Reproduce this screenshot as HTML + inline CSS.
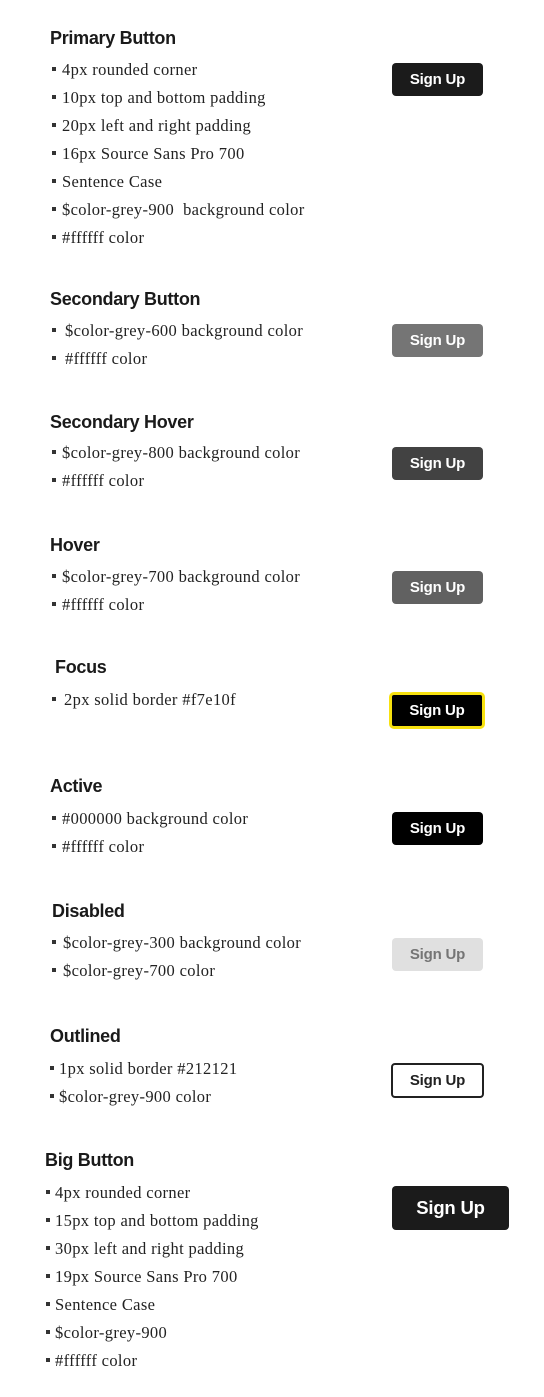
<!DOCTYPE html>
<html><head><meta charset="utf-8"><style>
body{margin:0;width:544px;height:1397px;background:#fff;position:relative;overflow:hidden}
.h{position:absolute;font:700 18px/24px "Liberation Sans",sans-serif;color:#1a1a1a;letter-spacing:-0.3px}
.i{position:absolute;font:16.5px/20px "Liberation Serif",serif;color:#222;white-space:pre;letter-spacing:0.35px}
.b{position:absolute;width:4px;height:4px;background:#333;margin-top:-2px}
.btn{position:absolute;box-sizing:border-box;border-radius:4px;color:#fff;font:700 15px "Liberation Sans",sans-serif;display:flex;align-items:center;justify-content:center;letter-spacing:-0.2px}
</style></head><body>
<div class="h" style="left:50px;top:26px">Primary Button</div>
<div class="b" style="left:52px;top:69px"></div><div class="i" style="left:62px;top:60px">4px rounded corner</div>
<div class="b" style="left:52px;top:97px"></div><div class="i" style="left:62px;top:88px">10px top and bottom padding</div>
<div class="b" style="left:52px;top:125px"></div><div class="i" style="left:62px;top:116px">20px left and right padding</div>
<div class="b" style="left:52px;top:153px"></div><div class="i" style="left:62px;top:144px">16px Source Sans Pro 700</div>
<div class="b" style="left:52px;top:181px"></div><div class="i" style="left:62px;top:172px">Sentence Case</div>
<div class="b" style="left:52px;top:209px"></div><div class="i" style="left:62px;top:200px">$color-grey-900  background color</div>
<div class="b" style="left:52px;top:237px"></div><div class="i" style="left:62px;top:228px">#ffffff color</div>
<div class="btn" style="left:392px;top:63px;width:91px;height:33px;background:#1b1b1b">Sign Up</div>

<div class="h" style="left:50px;top:287px">Secondary Button</div>
<div class="b" style="left:52px;top:330px"></div><div class="i" style="left:65px;top:321px">$color-grey-600 background color</div>
<div class="b" style="left:52px;top:358px"></div><div class="i" style="left:65px;top:349px">#ffffff color</div>
<div class="btn" style="left:392px;top:324px;width:91px;height:33px;background:#757575">Sign Up</div>

<div class="h" style="left:50px;top:410px">Secondary Hover</div>
<div class="b" style="left:52px;top:452px"></div><div class="i" style="left:62px;top:443px">$color-grey-800 background color</div>
<div class="b" style="left:52px;top:480px"></div><div class="i" style="left:62px;top:471px">#ffffff color</div>
<div class="btn" style="left:392px;top:447px;width:91px;height:33px;background:#424242">Sign Up</div>

<div class="h" style="left:50px;top:533px">Hover</div>
<div class="b" style="left:52px;top:576px"></div><div class="i" style="left:62px;top:567px">$color-grey-700 background color</div>
<div class="b" style="left:52px;top:604px"></div><div class="i" style="left:62px;top:595px">#ffffff color</div>
<div class="btn" style="left:392px;top:571px;width:91px;height:33px;background:#616161">Sign Up</div>

<div class="h" style="left:55px;top:655px">Focus</div>
<div class="b" style="left:52px;top:699px"></div><div class="i" style="left:64px;top:690px">2px solid border #f7e10f</div>
<div class="btn" style="left:389px;top:692px;width:96px;height:37px;background:#000;border:3px solid #f7e10f;border-radius:5px">Sign Up</div>

<div class="h" style="left:50px;top:774px">Active</div>
<div class="b" style="left:52px;top:818px"></div><div class="i" style="left:62px;top:809px">#000000 background color</div>
<div class="b" style="left:52px;top:846px"></div><div class="i" style="left:62px;top:837px">#ffffff color</div>
<div class="btn" style="left:392px;top:812px;width:91px;height:33px;background:#000">Sign Up</div>

<div class="h" style="left:52px;top:899px">Disabled</div>
<div class="b" style="left:52px;top:942px"></div><div class="i" style="left:63px;top:933px">$color-grey-300 background color</div>
<div class="b" style="left:52px;top:970px"></div><div class="i" style="left:63px;top:961px">$color-grey-700 color</div>
<div class="btn" style="left:392px;top:938px;width:91px;height:33px;background:#e0e0e0;color:#757575">Sign Up</div>

<div class="h" style="left:50px;top:1024px">Outlined</div>
<div class="b" style="left:50px;top:1068px"></div><div class="i" style="left:59px;top:1059px">1px solid border #212121</div>
<div class="b" style="left:50px;top:1096px"></div><div class="i" style="left:59px;top:1087px">$color-grey-900 color</div>
<div class="btn" style="left:391px;top:1063px;width:93px;height:35px;background:#fff;border:2px solid #212121;color:#212121">Sign Up</div>

<div class="h" style="left:45px;top:1148px">Big Button</div>
<div class="b" style="left:46px;top:1192px"></div><div class="i" style="left:55px;top:1183px">4px rounded corner</div>
<div class="b" style="left:46px;top:1220px"></div><div class="i" style="left:55px;top:1211px">15px top and bottom padding</div>
<div class="b" style="left:46px;top:1248px"></div><div class="i" style="left:55px;top:1239px">30px left and right padding</div>
<div class="b" style="left:46px;top:1276px"></div><div class="i" style="left:55px;top:1267px">19px Source Sans Pro 700</div>
<div class="b" style="left:46px;top:1304px"></div><div class="i" style="left:55px;top:1295px">Sentence Case</div>
<div class="b" style="left:46px;top:1332px"></div><div class="i" style="left:55px;top:1323px">$color-grey-900</div>
<div class="b" style="left:46px;top:1360px"></div><div class="i" style="left:55px;top:1351px">#ffffff color</div>
<div class="btn" style="left:392px;top:1186px;width:117px;height:44px;background:#1b1b1b;font-size:18.5px">Sign Up</div>
</body></html>
